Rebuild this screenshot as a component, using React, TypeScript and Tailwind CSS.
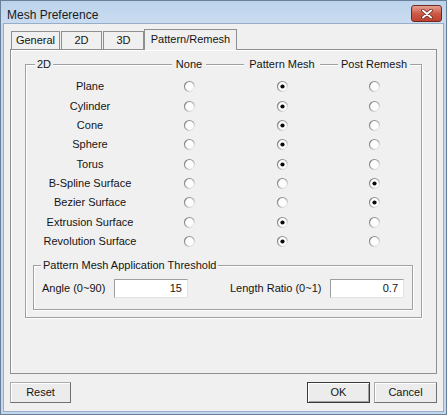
import React from "react";

type Choice = 0 | 1 | 2;

const shapes: [string, Choice][] = [
    ["Plane", 1],
    ["Cylinder", 1],
    ["Cone", 1],
    ["Sphere", 1],
    ["Torus", 1],
    ["B-Spline Surface", 2],
    ["Bezier Surface", 2],
    ["Extrusion Surface", 1],
    ["Revolution Surface", 1],
];

function Radio({ checked }: { checked: boolean }) {
    return (
        <svg width="13" height="13" viewBox="0 0 13 13">
            <defs>
                <linearGradient id="ring" x1="0" y1="0" x2="1" y2="1">
                    <stop offset="0" stopColor="#6f6f6f" />
                    <stop offset="0.55" stopColor="#b4b4b4" />
                    <stop offset="1" stopColor="#ffffff" />
                </linearGradient>
            </defs>
            <circle cx="6.5" cy="6.5" r="5" fill="#fdfdfd" stroke="url(#ring)" strokeWidth="1.2" />
            {checked && <circle cx="6.5" cy="6.5" r="2.1" fill="#0a0a0a" />}
        </svg>
    );
}

function Tab({ label, width, active }: { label: string; width: string; active?: boolean }) {
    if (active) {
        return (
            <div className={`${width} relative z-10 -mb-px h-[21px] border border-b-0 border-[#8e8f8f] bg-[#f0f0f0] flex items-center justify-center pb-[2px]`}>
                {label}
            </div>
        );
    }
    return (
        <div className={`${width} h-[18px] border border-b-0 border-[#8e8f8f] bg-[#f0f0f0] flex items-center justify-center`}>
            {label}
        </div>
    );
}

export default function App() {
    return (
        <div
            className="w-[447px] h-[415px] flex flex-col bg-[#c3d6ec] border border-[#6a7f99] text-[11px] text-[#141414] leading-[13px] whitespace-nowrap"
            style={{ fontFamily: '"Liberation Sans", Arial, sans-serif' }}
        >
            {/* Title bar */}
            <div className="h-[25px] flex items-start justify-between pl-[6px] pr-[4px] pt-[4px] bg-gradient-to-b from-[#bcd3ec] to-[#cadcf0]">
                <span className="mt-[2px] text-[12px] leading-[16px] text-[#1b1b1b]">Mesh Preference</span>
                <div className="w-[31px] h-[17px] rounded-[3px] border border-[#6e2a22] bg-gradient-to-b from-[#e5a092] via-[#cb5a47] to-[#c0412d] flex items-center justify-center">
                    <svg width="12" height="10" viewBox="0 0 12 10">
                        <path d="M2 1.5 L10 8.5 M10 1.5 L2 8.5" stroke="#5b1e16" strokeWidth="3.4" strokeLinecap="round" />
                        <path d="M2 1.5 L10 8.5 M10 1.5 L2 8.5" stroke="#ffffff" strokeWidth="2" strokeLinecap="round" />
                    </svg>
                </div>
            </div>

            {/* Client area */}
            <div className="flex-1 flex flex-col mx-[2px] mb-[2px] bg-[#f0f0f0] border border-[#97aec8] pt-[4px] px-[6px] pb-[8px]">
                {/* Tabs */}
                <div className="flex items-end gap-[1px] pl-[1px] h-[21px]">
                    <Tab label="General" width="w-[49px]" />
                    <Tab label="2D" width="w-[41px]" />
                    <Tab label="3D" width="w-[41px]" />
                    <Tab label="Pattern/Remesh" width="w-[93px] -ml-[1px]" active />
                </div>

                {/* Panel */}
                <div className="h-[325px] border border-[#8e8f8f] shadow-[inset_1px_1px_0_#ffffff] pl-[14px] pt-[14px]">
                    {/* 2D group */}
                    <div className="w-[397px] h-[254px] flex flex-col border border-[#a0a0a0] shadow-[inset_1px_1px_0_#ffffff,1px_1px_0_#ffffff]">
                        <div className="-mt-[7px] h-[13px] grid grid-cols-[128px_70px_116px_68px_1fr]">
                            <div className="pl-[9px]">
                                <span className="bg-[#f0f0f0] px-[2px]">2D</span>
                            </div>
                            <div className="flex justify-center">
                                <span className="bg-[#f0f0f0] px-[4px]">None</span>
                            </div>
                            <div className="flex justify-center">
                                <span className="bg-[#f0f0f0] px-[5px]">Pattern Mesh</span>
                            </div>
                            <div className="flex justify-center">
                                <span className="bg-[#f0f0f0] px-[3px]">Post Remesh</span>
                            </div>
                            <div />
                        </div>

                        <div className="flex flex-col pt-[6px]">
                            {shapes.map(([name, sel]) => (
                                <div key={name} className="h-[19.375px] grid grid-cols-[128px_70px_116px_68px_1fr] items-center">
                                    <div className="text-center">{name}</div>
                                    <div className="flex justify-center"><Radio checked={sel === 0} /></div>
                                    <div className="flex justify-center"><Radio checked={sel === 1} /></div>
                                    <div className="flex justify-center"><Radio checked={sel === 2} /></div>
                                    <div />
                                </div>
                            ))}
                        </div>

                        {/* Threshold group */}
                        <div className="mt-[14px] ml-[7px] mr-[8px] h-[45px] flex flex-col border border-[#a0a0a0] shadow-[inset_1px_1px_0_#ffffff,1px_1px_0_#ffffff]">
                            <div className="-mt-[7px] h-[13px] pl-[7px]">
                                <span className="bg-[#f0f0f0] px-[2px]">Pattern Mesh Application Threshold</span>
                            </div>
                            <div className="mt-[7px] flex items-center pl-[8px]">
                                <div className="w-[72px]">Angle (0~90)</div>
                                <div className="w-[74px] h-[19px] bg-white border border-[#a0a0a0] border-r-[#e3e3e3] border-b-[#e3e3e3] flex items-center justify-end pr-[5px]">
                                    15
                                </div>
                                <div className="ml-[42px] w-[100px]">Length Ratio (0~1)</div>
                                <div className="w-[74px] h-[19px] bg-white border border-[#a0a0a0] border-r-[#e3e3e3] border-b-[#e3e3e3] flex items-center justify-end pr-[5px]">
                                    0.7
                                </div>
                            </div>
                        </div>
                    </div>
                </div>

                {/* Buttons */}
                <div className="mt-[8px] flex items-center justify-between">
                    <button className="w-[61px] h-[21px] bg-[#ececec] border border-[#acacac] border-r-[#707070] border-b-[#707070] shadow-[inset_1px_1px_0_#ffffff]">
                        Reset
                    </button>
                    <div className="flex gap-[4px]">
                        <button className="w-[63px] h-[21px] bg-[#ececec] border border-[#3c3c3c] shadow-[inset_1px_1px_0_#ffffff,inset_-1px_-1px_0_#a0a0a0]">
                            OK
                        </button>
                        <button className="w-[63px] h-[21px] bg-[#ececec] border border-[#acacac] border-r-[#707070] border-b-[#707070] shadow-[inset_1px_1px_0_#ffffff]">
                            Cancel
                        </button>
                    </div>
                </div>
            </div>
        </div>
    );
}
